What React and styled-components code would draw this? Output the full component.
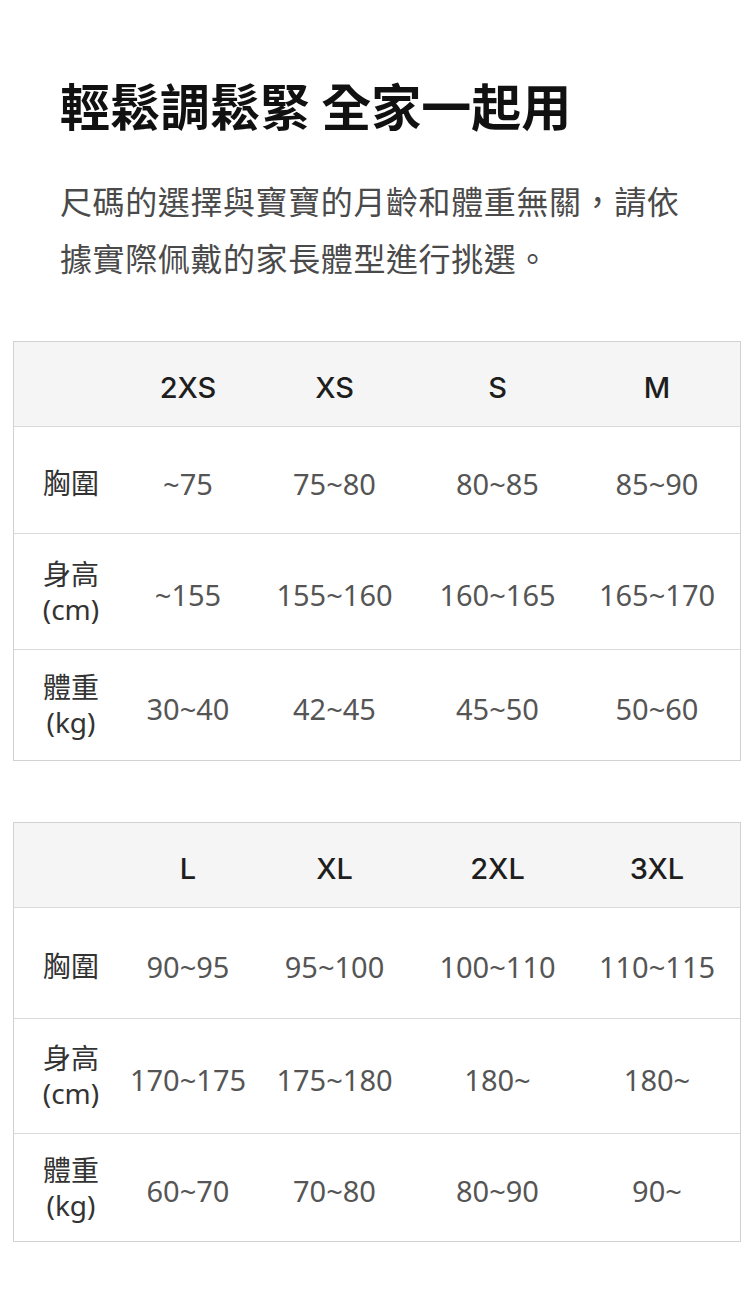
import styled, { createGlobalStyle } from 'styled-components';

const GlobalStyle = createGlobalStyle`
  html, body {
    margin: 0;
    padding: 0;
    background: #ffffff;
  }
  * {
    box-sizing: border-box;
  }
`;

const Page = styled.div`
  width: 754px;
  padding: 74px 13px 60px;
  font-family: "Noto Sans", "Noto Sans CJK TC", sans-serif;
`;

const Intro = styled.div`
  padding: 0 47px;
  margin-bottom: 55px;
`;

const Title = styled.h1`
  margin: 0 0 38px;
  font-family: "Noto Sans CJK TC", sans-serif;
  font-size: 50px;
  line-height: 60px;
  font-weight: 700;
  color: #111;
`;

const Desc = styled.p`
  margin: 0;
  font-family: "Noto Sans CJK TC", sans-serif;
  font-size: 32px;
  line-height: 57px;
  letter-spacing: 0.6px;
  color: #4a4a4a;
`;

const Tables = styled.div`
  display: flex;
  flex-direction: column;
  gap: 61px;
`;

const Table = styled.div`
  border: 1px solid #d2d2d2;
`;

const Row = styled.div`
  display: grid;
  grid-template-columns: 114px 120px 173px 153px 1fr;
  height: ${(p) => p.$h}px;
  background: ${(p) => (p.$head ? '#f5f5f5' : '#fff')};
  & + & {
    border-top: 1px solid #dadada;
  }
`;

const Cell = styled.div`
  display: flex;
  align-items: center;
  justify-content: center;
  padding-top: 6px;
`;

const SizeCell = styled(Cell)`
  font-family: Inter, "Liberation Sans", Arial, sans-serif;
  font-size: 29px;
  font-weight: 500;
  color: #1e1e1e;
`;

const ValueCell = styled(Cell)`
  font-family: "Noto Sans", "Open Sans", sans-serif;
  font-size: 29px;
  color: #555;
`;

const LabelCell = styled(Cell)`
  flex-direction: column;
  padding-top: ${(p) => (p.$two ? '0' : '6px')};
  font-family: "Noto Sans", "Noto Sans CJK TC", sans-serif;
  font-size: 28px;
  line-height: 35px;
  color: #333;
`;

const tables = [
  {
    sizes: ['2XS', 'XS', 'S', 'M'],
    heights: [84, 107, 116, 111],
    rows: [
      { label: '胸圍', values: ['~75', '75~80', '80~85', '85~90'] },
      { label: '身高', unit: '(cm)', values: ['~155', '155~160', '160~165', '165~170'] },
      { label: '體重', unit: '(kg)', values: ['30~40', '42~45', '45~50', '50~60'] },
    ],
  },
  {
    sizes: ['L', 'XL', '2XL', '3XL'],
    heights: [84, 111, 115, 108],
    rows: [
      { label: '胸圍', values: ['90~95', '95~100', '100~110', '110~115'] },
      { label: '身高', unit: '(cm)', values: ['170~175', '175~180', '180~', '180~'] },
      { label: '體重', unit: '(kg)', values: ['60~70', '70~80', '80~90', '90~'] },
    ],
  },
];

const SizeTable = ({ sizes, heights, rows }) => (
  <Table>
    <Row $head $h={heights[0]}>
      <Cell />
      {sizes.map((s) => (
        <SizeCell key={s}>{s}</SizeCell>
      ))}
    </Row>
    {rows.map((r, i) => (
      <Row key={r.label} $h={heights[i + 1]}>
        <LabelCell $two={!!r.unit}>
          <span>{r.label}</span>
          {r.unit && <span>{r.unit}</span>}
        </LabelCell>
        {r.values.map((v, j) => (
          <ValueCell key={j}>{v}</ValueCell>
        ))}
      </Row>
    ))}
  </Table>
);

export default function App() {
  return (
    <>
      <GlobalStyle />
      <Page>
        <Intro>
          <Title>輕鬆調鬆緊 全家一起用</Title>
          <Desc>
            尺碼的選擇與寶寶的月齡和體重無關，請依
            <br />
            據實際佩戴的家長體型進行挑選。
          </Desc>
        </Intro>
        <Tables>
          {tables.map((t, i) => (
            <SizeTable key={i} {...t} />
          ))}
        </Tables>
      </Page>
    </>
  );
}
